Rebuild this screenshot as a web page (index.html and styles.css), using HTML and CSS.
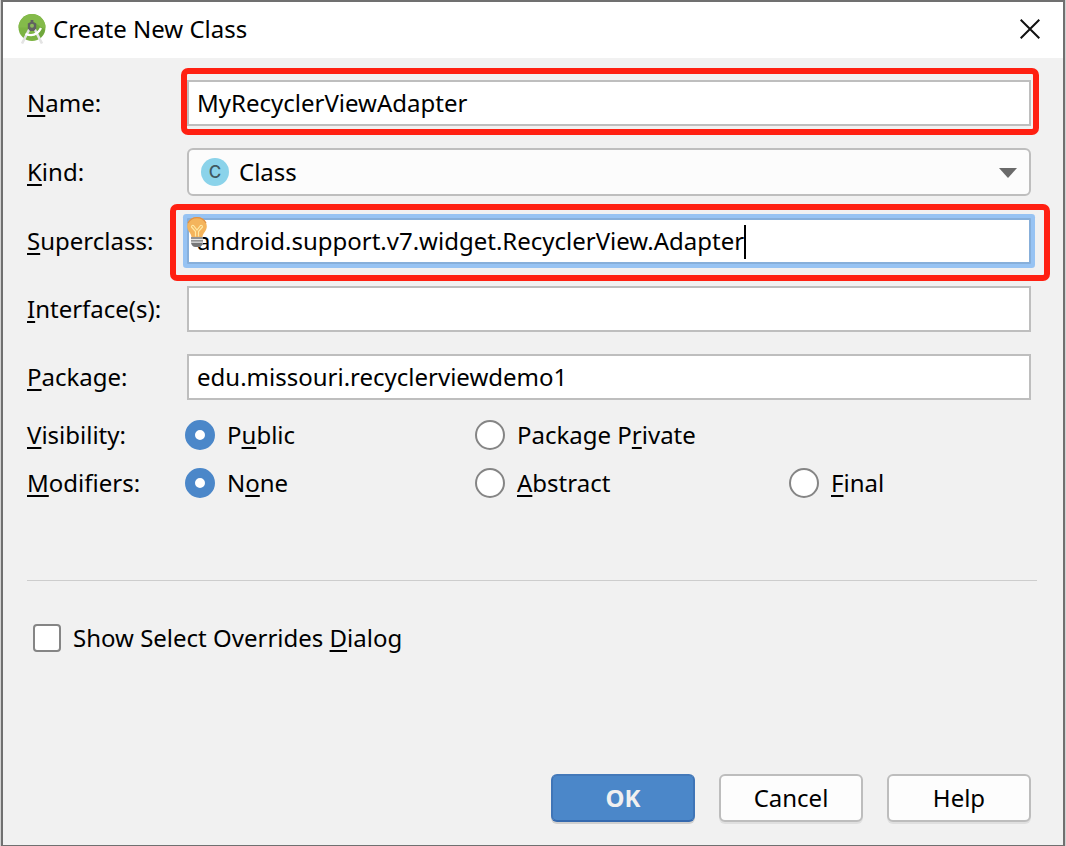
FILE: index.html
```html
<!DOCTYPE html>
<html lang="en">
<head>
<meta charset="utf-8">
<title>Create New Class</title>
<link rel="stylesheet" href="styles.css">
</head>
<body>
<form class="dialog" role="dialog" aria-labelledby="title">
  <header class="titlebar">
    <svg class="logo" viewBox="0 0 28 30" aria-hidden="true">
      <circle cx="14" cy="13.500" r="13.500" fill="#7cb342"/>
      <path d="M.5 13.500A13.500 13.500 0 0 1 27.500 13.500z" fill="#84ba4a"/>
      <path d="M16 8l11 8a13.500 13.500 0 0 1-5 8.500z" fill="#689f38" opacity=".6"/>
      <path d="M12.500 13L4 29.500M15.500 13L24 29.500" stroke="#e4e4e4" stroke-width="2.600" fill="none"/>
      <path d="M7.500 20Q18 24 23 14" stroke="#fff" stroke-width="2.300" fill="none"/>
      <path d="M12.600 6h2.800v2l2.800 1.500v5l-2.200 2.500h-4l-2.200-2.500v-5l2.800-1.500z" fill="#616161"/>
      <circle cx="14" cy="11.800" r="2" fill="#8bb85c"/>
    </svg>
    <h1 class="title" id="title">Create New Class</h1>
    <button class="close" type="button" aria-label="Close">
      <svg viewBox="0 0 20 20" aria-hidden="true"><path d="M.7.7l18.600 18.600M19.300.7L.7 19.300" stroke="#111" stroke-width="2"/></svg>
    </button>
  </header>
  <main class="content">
    <div class="fields">
      <label class="label" for="name"><u>N</u>ame:</label>
      <div class="field marked"><input class="input" id="name" type="text" value="MyRecyclerViewAdapter"></div>

      <label class="label" for="kind"><u>K</u>ind:</label>
      <div class="field">
        <select class="input select" id="kind"><option>Class</option></select>
        <span class="kind-icon" aria-hidden="true">C</span>
        <svg class="arrow" viewBox="0 0 18 10" aria-hidden="true"><path d="M0 0h18L9 10z" fill="#6a6a6a"/></svg>
      </div>

      <label class="label" for="super"><u>S</u>uperclass:</label>
      <div class="field marked marked-wide">
        <input class="input focused" id="super" type="text" value="android.support.v7.widget.RecyclerView.Adapter">
        <span class="caret"></span>
        <svg class="bulb" viewBox="0 0 20 30" aria-hidden="true">
          <path d="M10 0C4.300 0 .2 4.200.2 9.500c0 4.500 4 6.500 4.300 10.500h11c.3-4 4.300-6 4.300-10.500C19.800 4.200 15.700 0 10 0z" fill="#f4b45c"/>
          <path d="M1 6Q4 .7 10 .7T19 6" stroke="#df9146" stroke-width="1.300" fill="none"/>
          <path d="M8.500 19.500V14.500L4.500 10q0-2 2-1.500L10 13l3.500-4.500q2-.5 2 1.500l-4 4.500v5" stroke="#ffe8a3" stroke-width="1.200" fill="none"/>
          <path d="M4 20h12v7l-3.500 3h-5L4 27z" fill="#e8e8e8"/>
          <path d="M4 21h12M4 23.800h12" stroke="#777" stroke-width="1.300"/>
          <path d="M4 25.800h12q-1 4.200-4.500 4.200h-3Q5 30 4 25.800z" fill="#777"/>
        </svg>
      </div>

      <label class="label" for="interfaces"><u>I</u>nterface(s):</label>
      <div class="field"><input class="input" id="interfaces" type="text"></div>

      <label class="label" for="package"><u>P</u>ackage:</label>
      <div class="field"><input class="input" id="package" type="text" value="edu.missouri.recyclerviewdemo1"></div>
    </div>

    <div class="choices">
      <div class="choice-row" role="radiogroup" aria-labelledby="visibility">
        <span id="visibility"><u>V</u>isibility:</span>
        <label class="choice"><input class="radio" type="radio" name="visibility" checked><span>P<u>u</u>blic</span></label>
        <label class="choice"><input class="radio" type="radio" name="visibility"><span>Package P<u>r</u>ivate</span></label>
      </div>
      <div class="choice-row" role="radiogroup" aria-labelledby="modifiers">
        <span id="modifiers"><u>M</u>odifiers:</span>
        <label class="choice"><input class="radio" type="radio" name="modifiers" checked><span>N<u>o</u>ne</span></label>
        <label class="choice"><input class="radio" type="radio" name="modifiers"><span><u>A</u>bstract</span></label>
        <label class="choice"><input class="radio" type="radio" name="modifiers"><span><u>F</u>inal</span></label>
      </div>
    </div>

    <hr class="divider">
    <label class="choice overrides"><input class="checkbox" type="checkbox"><span>Show Select Overrides <u>D</u>ialog</span></label>
  </main>
  <footer class="actions">
    <button class="button primary" type="button">OK</button>
    <button class="button" type="button">Cancel</button>
    <button class="button" type="button">Help</button>
  </footer>
</form>
</body>
</html>
```
FILE: styles.css
```css
* { box-sizing: border-box; }

body {
  margin: 0;
  padding: 0 1px;
  background: #d2d2d2;
  color: #000;
  font: 24px/30px "Noto Sans", "Open Sans", sans-serif;
}

u {
  text-decoration: underline 2px;
  text-underline-offset: 3px;
  text-decoration-skip-ink: none;
}

.dialog {
  display: flex;
  flex-direction: column;
  min-height: 100vh;
  border: 2px solid #707070;
  border-bottom-width: 1px;
  background: #f1f1f1;
}

.titlebar {
  display: flex;
  align-items: center;
  height: 56px;
  padding: 0 23px 2px 15px;
  background: #fff;
}

.logo { width: 28px; height: 30px; }

.title {
  flex: 1;
  margin: 0 0 0 7px;
  font-size: 24px;
  font-weight: 400;
}

.close {
  display: flex;
  padding: 0;
  border: 0;
  background: none;
}

.close svg { width: 20px; height: 20px; }

.content { padding: 22px 26px 0 24px; }

.fields {
  display: grid;
  grid-template-columns: 160px 1fr;
  row-gap: 22px;
  align-items: center;
  padding-right: 6px;
}

.field { position: relative; display: flex; }

.input {
  width: 100%;
  height: 46px;
  padding: 0 8px 2px;
  border: 2px solid #bebebe;
  border-radius: 0;
  outline: 0;
  background: #fff;
  color: #000;
  font: inherit;
}

.select {
  height: 48px;
  padding: 0 50px;
  border-radius: 6px;
  background: #fcfcfc;
  appearance: none;
}

.kind-icon {
  position: absolute;
  left: 14px;
  top: 10px;
  width: 28px;
  height: 28px;
  border-radius: 50%;
  background: #8bd3ea;
  color: #405860;
  font: 500 17px/28px Inter, sans-serif;
  text-align: center;
}

.arrow {
  position: absolute;
  right: 14px;
  top: 20px;
  width: 18px;
  height: 10px;
}

.focused {
  border-color: #87afda;
  border-radius: 1px;
  box-shadow: 0 0 0 4px #97c3f3;
}

.caret {
  position: absolute;
  left: 557px;
  top: 7px;
  width: 2px;
  height: 34px;
  background: #000;
}

.bulb {
  position: absolute;
  left: 0;
  top: -1px;
  width: 20px;
  height: 30px;
}

.marked::after {
  content: "";
  position: absolute;
  inset: -12px -8px -9px -6px;
  border: 6px solid #ff2012;
  border-radius: 7px;
  pointer-events: none;
}

.marked-wide::after { inset: -14px -19px -17px -17px; }

.choices {
  display: grid;
  gap: 18px;
  padding-top: 20px;
}

.choice-row {
  display: grid;
  grid-template-columns: 158px 290fr 314fr 248fr;
  align-items: center;
}

.choice {
  display: flex;
  align-items: center;
  gap: 12px;
}

.radio,
.checkbox {
  flex: none;
  margin: 0;
  border: 2px solid #858585;
  background: #fff;
  appearance: none;
}

.radio {
  width: 30px;
  height: 30px;
  border-radius: 50%;
}

.radio:checked { border: 10px solid #4b87c9; }

.checkbox {
  width: 28px;
  height: 28px;
  border-radius: 4px;
}

.divider {
  height: 1px;
  margin: 82px 0 42px;
  border: 0;
  background: #cdcdcd;
}

.overrides { padding-left: 6px; }

.actions {
  display: flex;
  justify-content: flex-end;
  gap: 24px;
  margin-top: auto;
  padding: 24px 32px 23px;
}

.button {
  width: 144px;
  height: 48px;
  padding: 0;
  border: 2px solid #bdbdbd;
  border-radius: 6px;
  background: #fdfdfd;
  box-shadow: 0 2px 0 #dfdfdf;
  color: #000;
  font: inherit;
}

.primary {
  border-color: #4479b9 #3f75b7 #3569ae;
  background: #4b87c9;
  box-shadow: 0 2px 0 #cfcfcf;
  color: #f0f0f0;
  font-weight: 700;
}
```
